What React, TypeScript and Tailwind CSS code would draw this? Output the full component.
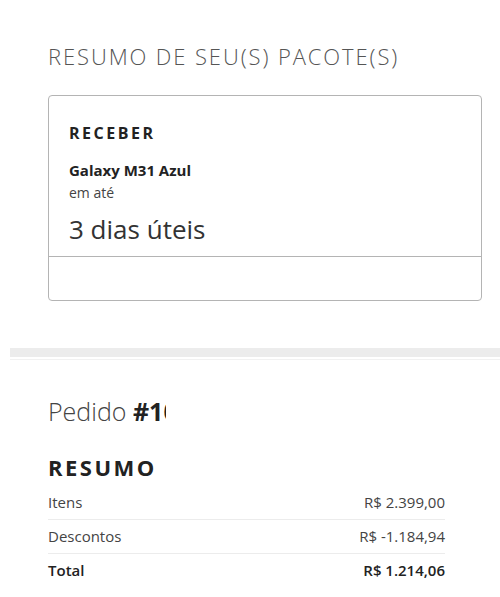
export default function App() {
  const rows = [
    { label: "Itens", value: "R$ 2.399,00" },
    { label: "Descontos", value: "R$ -1.184,94" },
  ];
  return (
    <div className="w-[500px] h-[597px] overflow-hidden bg-white" style={{ fontFamily: '"Open Sans", "Noto Sans", sans-serif' }}>
      {/* Pacotes */}
      <div className="pl-[48px] pr-[18px] pt-[40px]">
        <h2 className="text-[22px] font-light tracking-[1.9px] text-[#555] leading-[32px]">RESUMO DE SEU(S) PACOTE(S)</h2>
        <div className="mt-[23px] border border-[#b4b4b4] rounded-[4px]">
          <div className="px-[20px] pt-[26px] pb-[10px]">
            <div className="text-[16px] font-bold tracking-[2.5px] text-[#222] leading-[22px]">RECEBER</div>
            <div className="mt-[16px] text-[15px] font-bold text-[#222] leading-[20px]">Galaxy M31 Azul</div>
            <div className="mt-[3px] text-[14px] text-[#444] leading-[20px]">em até</div>
            <div className="mt-[9px] text-[26px] text-[#333] leading-[34px]">3 dias úteis</div>
          </div>
          <div className="border-t border-[#b4b4b4] h-[44px]" />
        </div>
      </div>

      {/* separator */}
      <div className="mt-[47px] ml-[10px] h-[9px] bg-[#ececec]" />
      <div className="mt-[2px] ml-[10px] h-px bg-[#f1f1f1]" />

      {/* Pedido */}
      <div className="pl-[48px] pt-[34px]">
        <div className="text-[25px] font-light text-[#444] leading-[34px] flex items-baseline">
          <span>Pedido&nbsp;</span>
          <span className="inline-block w-[33px] overflow-hidden whitespace-nowrap font-bold text-[#222]">#1000000</span>
        </div>
        <div className="mt-[24px] text-[22px] font-bold tracking-[2.5px] text-[#222] leading-[30px]">RESUMO</div>
        <div className="w-[397px] mt-[4px] text-[15px] leading-[19px]">
          {rows.map((r) => (
            <div key={r.label} className="flex justify-between py-[7px] border-b border-[#ececec] text-[#444]">
              <span>{r.label}</span>
              <span>{r.value}</span>
            </div>
          ))}
          <div className="flex justify-between py-[7px] font-semibold text-[#222]">
            <span>Total</span>
            <span>R$ 1.214,06</span>
          </div>
        </div>
      </div>
    </div>
  );
}
